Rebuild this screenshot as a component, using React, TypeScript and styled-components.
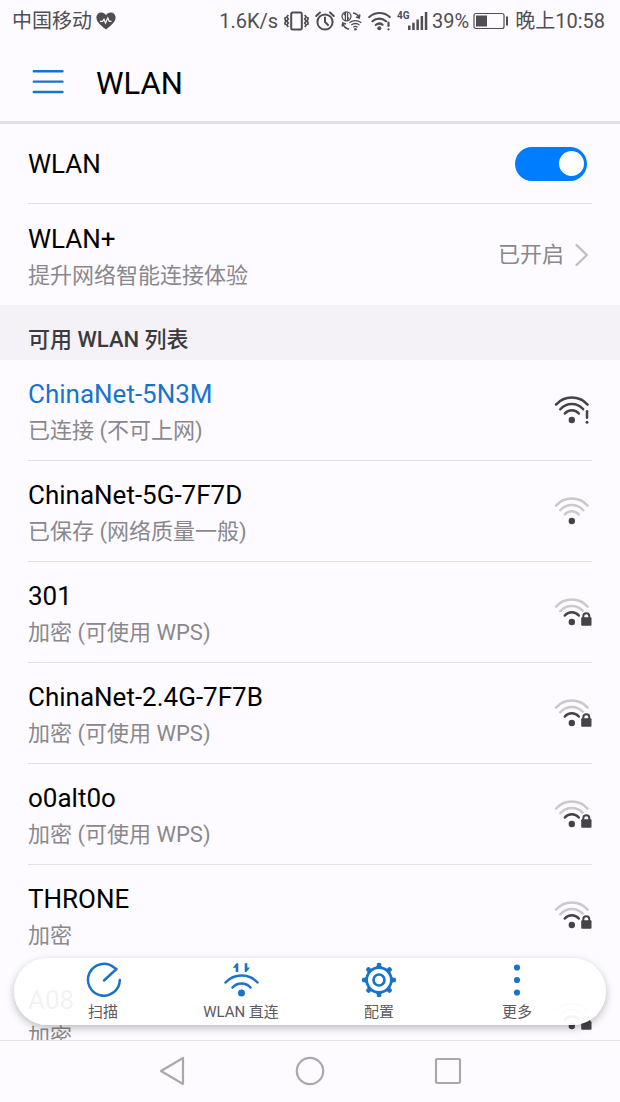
import React, { useState } from "react";
import styled, { createGlobalStyle } from "styled-components";

const color = {
  page: "#fdfbff",
  band: "#f4f2f6",
  line: "#e2e0e4",
  text: "#000000",
  muted: "#8a888c",
  status: "#504e52",
  accent: "#1a73cb",
  toggle: "#007dff",
  glyph: "#454347",
  faint: "#cbc9cd",
  nav: "#aaa8ac",
};

const GlobalStyle = createGlobalStyle`
  * { box-sizing: border-box; }
  body {
    margin: 0;
    background: ${color.page};
    color: ${color.text};
    font-family: Roboto, "Noto Sans CJK SC", sans-serif;
  }
  h1, h2, ul { margin: 0; padding: 0; }
  ul { list-style: none; }
  button { font: inherit; color: inherit; border: 0; padding: 0; background: none; cursor: pointer; }
  svg { display: block; flex: none; }
`;

const Screen = styled.div`
  display: flex;
  flex-direction: column;
  height: 100vh;
  overflow: hidden;
`;

const StatusBar = styled.div`
  display: flex;
  justify-content: space-between;
  align-items: center;
  flex: none;
  height: 42px;
  padding: 0 15px 0 12px;
  font-size: 20px;
  line-height: 24px;
  color: ${color.status};
  white-space: nowrap;
`;

const StatusGroup = styled.div<{ $gap: number }>`
  display: flex;
  align-items: center;
  gap: ${(p) => p.$gap}px;
`;

const Header = styled.header`
  display: flex;
  align-items: center;
  flex: none;
  gap: 32px;
  height: 82px;
  padding: 0 32px;
  border-bottom: 3px solid ${color.line};
`;

const MenuButton = styled.button`
  display: flex;
`;

const Title = styled.h1`
  padding-top: 4px;
  font-size: 31px;
  font-weight: 400;
  line-height: 40px;
`;

const Body = styled.div`
  position: relative;
  flex: 1;
  min-height: 0;
`;

const Scroller = styled.main`
  height: 100%;
  overflow-y: auto;
  scrollbar-width: none;
`;

const Inset = styled.div`
  padding: 0 28px;
`;

const ToggleRow = styled.label`
  display: flex;
  align-items: center;
  justify-content: space-between;
  height: 80px;
  padding-right: 5px;
  border-bottom: 1px solid ${color.line};
  font-size: 26px;
  line-height: 36px;
`;

const Switch = styled.input`
  appearance: none;
  display: flex;
  align-items: center;
  width: 72px;
  height: 34px;
  margin: 0;
  padding: 0 3px;
  border-radius: 17px;
  background: ${color.faint};
  cursor: pointer;
  &::before {
    content: "";
    width: 25px;
    height: 25px;
    border-radius: 50%;
    background: #fff;
  }
  &:checked {
    justify-content: flex-end;
    background: ${color.toggle};
  }
`;

const Row = styled.button<{ $divided?: boolean }>`
  display: flex;
  align-items: center;
  justify-content: space-between;
  width: 100%;
  height: 101px;
  text-align: left;
  border-bottom: ${(p) => (p.$divided ? `1px solid ${color.line}` : "0")};
`;

const RowText = styled.span`
  display: flex;
  flex-direction: column;
  padding-top: 6px;
`;

const RowTitle = styled.span<{ $active?: boolean }>`
  font-size: 26px;
  line-height: 36px;
  color: ${(p) => (p.$active ? color.accent : color.text)};
`;

const RowNote = styled.span`
  font-size: 22px;
  line-height: 38px;
  color: ${color.muted};
`;

const RowValue = styled.span`
  display: flex;
  align-items: center;
  gap: 10px;
  padding-right: 3px;
  font-size: 22px;
  line-height: 38px;
  color: ${color.muted};
`;

const SectionTitle = styled.h2`
  height: 55px;
  padding: 16px 28px 0;
  background: ${color.band};
  font-size: 22px;
  font-weight: 500;
  line-height: 38px;
  color: #3c3a3e;
`;

const Toolbar = styled.div`
  position: absolute;
  left: 14px;
  right: 14px;
  bottom: 15px;
  display: flex;
  height: 67px;
  padding: 0 20px;
  border-radius: 34px;
  background: rgba(255, 255, 255, 0.95);
  box-shadow: 0 3px 8px rgba(0, 0, 0, 0.26);
`;

const ToolButton = styled.button`
  display: flex;
  flex: 1;
  flex-direction: column;
  align-items: center;
  padding-top: 4px;
  font-size: 15px;
  line-height: 28px;
  color: #5c5a5e;
  svg { color: ${color.accent}; }
`;

const NavBar = styled.nav`
  display: flex;
  flex: none;
  justify-content: center;
  height: 62px;
  padding-bottom: 2px;
  border-top: 1px solid ${color.line};
`;

const NavButton = styled.button`
  display: flex;
  align-items: center;
  justify-content: center;
  width: 138px;
  color: ${color.nav};
`;

type Badge = "lock" | "alert" | "none";

const WifiIcon = ({ level, badge }: { level: number; badge: Badge }) => {
  const tone = (n: number) => (level >= n ? color.glyph : color.faint);
  return (
    <svg width="40" height="36" viewBox="0 0 40 36" fill="none" strokeWidth="2.5" strokeLinecap="round">
      <path d="M4 12.6A21.3 21.3 0 0 1 35.6 12.6" stroke={tone(3)} />
      <path d="M8.3 17.3A15.3 15.3 0 0 1 31.3 17.3" stroke={tone(2)} />
      <path d="M12.8 21.5A9.3 9.3 0 0 1 26.8 21.5" stroke={tone(1)} />
      <circle cx="19.8" cy="28" r="3.2" fill={color.glyph} />
      {badge === "alert" && (
        <g>
          <path d="M35 19.3V25.7" stroke={color.page} strokeWidth="6" />
          <path d="M35 19.3V25.7" stroke={color.glyph} />
          <circle cx="35" cy="30.3" r="1.5" fill={color.glyph} />
        </g>
      )}
      {badge === "lock" && (
        <g>
          <path d="M30.8 24V22.6a3.5 3.5 0 0 1 7 0V24" stroke={color.page} strokeWidth="5" />
          <path d="M31.3 24V22.3a3 3 0 0 1 6 0V24" stroke={color.glyph} strokeWidth="2" />
          <rect x="29.2" y="23.2" width="10.3" height="8.6" rx="1" fill={color.glyph} />
        </g>
      )}
    </svg>
  );
};

const HeartIcon = () => (
  <svg width="20" height="18" viewBox="0 0 20 18">
    <path d="M10 17.6C4.6 13.4.4 10 .4 5.6.4 2.6 2.6.5 5.3.5 7.3.5 9 1.5 10 3.2 11 1.5 12.7.5 14.7.5 17.4.5 19.6 2.6 19.6 5.6 19.6 10 15.4 13.4 10 17.6Z" fill={color.status} />
    <path d="M4 9.3H6.500L8 7.300 9.500 11 11.800 6 13.300 9.300H15.500" fill="none" stroke={color.page} strokeWidth="1.2" />
  </svg>
);

const VibrateIcon = () => (
  <svg width="25" height="20" viewBox="0 0 25 20" fill="none" stroke="currentColor" strokeWidth="2">
    <rect x="7.2" y="1.5" width="10.6" height="17" rx="1.5" />
    <path d="M4.3 4 2.800 6 4.300 8 2.800 10 4.300 12 2.800 14 4.300 16M1.400 6 .9 8 1.900 10 .9 12 1.400 14M20.700 4 22.200 6 20.700 8 22.200 10 20.700 12 22.200 14 20.700 16M23.600 6 24.100 8 23.100 10 24.100 12 23.600 14" strokeWidth="1.7" />
  </svg>
);

const AlarmIcon = () => (
  <svg width="20" height="20" viewBox="0 0 20 20" fill="none" stroke="currentColor" strokeWidth="2" strokeLinecap="round">
    <circle cx="10" cy="11" r="7.6" />
    <path d="M10 6.500V11L13 14M1.200 5 5 1.500M18.800 5 15 1.500" />
  </svg>
);

const NetworkSwapIcon = () => (
  <svg width="21" height="20" viewBox="0 0 21 20" fill="none" stroke="currentColor" strokeWidth="1.3">
    <circle cx="5.500" cy="5.300" r="4.500" />
    <path d="M4.400 9V2L2.800 4M6.600 1.500V8.500L8.200 6.600" />
    <path d="M12 2C15 2.500 17 4 18 6.500M18.800 3.500 18.200 7 15 6M2 12.500C2.800 15.500 4.800 17.500 8 18.200M1.200 15.500 1.800 12 5 13" strokeWidth="1.6" />
    <path d="M8.500 11.800A9 9 0 0 1 20.300 11.800M10.300 14.100A6 6 0 0 1 18.500 14.100M12.200 16.200A3.500 3.500 0 0 1 16.600 16.200" />
    <circle cx="14.400" cy="18.300" r="1.3" fill="currentColor" stroke="none" />
  </svg>
);

const StatusWifiIcon = () => (
  <svg width="23" height="20" viewBox="0 0 23 20" fill="none" stroke="currentColor" strokeWidth="2.2" strokeLinecap="round">
    <path d="M1.300 6A15 15 0 0 1 21.700 6M4.500 10.200A10 10 0 0 1 18 10.200M7.800 14A5.500 5.500 0 0 1 14.500 13.600" />
    <circle cx="11.300" cy="17.300" r="2" fill="currentColor" stroke="none" />
    <path d="M20.500 11.500V15M20.500 18.400V18.500" />
  </svg>
);

const SignalIcon = () => (
  <svg width="31" height="22" viewBox="0 0 31 22" fill="currentColor">
    <text x="0" y="9" fontSize="10" fontWeight="700">4G</text>
    <path d="M11 15.500h2.500v4.500h-2.500zM15.200 12.700h2.500V20h-2.500zM19.400 9.500h2.500v10.500h-2.500zM23.600 6h2.500V20h-2.500zM27.800 2h2.500V20h-2.500z" />
  </svg>
);

const BatteryIcon = () => (
  <svg width="36" height="18" viewBox="0 0 36 18">
    <rect x="1" y="1.500" width="30" height="15" rx="2" fill="none" stroke="currentColor" strokeWidth="1.2" />
    <rect x="3" y="3.500" width="11" height="11" fill="currentColor" />
    <path d="M34 4.500V13.500" stroke="currentColor" strokeWidth="2" />
  </svg>
);

const MenuIcon = () => (
  <svg width="32" height="26" viewBox="0 0 32 26" stroke={color.accent} strokeWidth="2.4" strokeLinecap="round">
    <path d="M1.800 2.300H30.500M1.800 12.600H30.500M1.800 23H30.500" />
  </svg>
);

const ChevronIcon = () => (
  <svg width="15" height="24" viewBox="0 0 15 24" fill="none" stroke="#c0bec2" strokeWidth="2.3" strokeLinecap="round">
    <path d="M2.500 2 12.800 12 2.500 22" />
  </svg>
);

const ScanIcon = () => (
  <svg width="36" height="36" viewBox="0 0 36 36" fill="none" stroke="currentColor" strokeWidth="2.5" strokeLinecap="round" strokeLinejoin="round">
    <path d="M34.800 18A15.900 15.900 0 1 1 29 5.500L31.500 7 19 18.500" />
  </svg>
);

const DirectIcon = () => (
  <svg width="36" height="36" viewBox="0 0 36 36" fill="none" stroke="currentColor" strokeWidth="2.5" strokeLinecap="round">
    <path d="M2.500 20.500A22 22 0 0 1 34.500 20.500M9.500 25.500A12 12 0 0 1 27.500 25.500" />
    <circle cx="18.500" cy="31" r="3.500" fill="currentColor" stroke="none" />
    <path d="M15.300 10V1.200H13.500L9.800 5.800H12.700V10ZM21.700 1.200V10H23.500L27 5.500H24.300V1.200Z" fill="currentColor" stroke="none" />
  </svg>
);

const GearIcon = () => (
  <svg width="36" height="36" viewBox="0 0 36 36" fill="none" stroke="currentColor" strokeWidth="2.7">
    <circle cx="18" cy="18" r="12.300" />
    <circle cx="18" cy="18" r="5.500" />
    {[0, 45, 90, 135, 180, 225, 270, 315].map((angle) => (
      <path
        key={angle}
        d="M14.500 5.500 15.800 3.800V1.500Q18 .2 20.200 1.500V3.800L21.500 5.500Z"
        transform={`rotate(${angle} 18 18)`}
        fill="currentColor"
        stroke="none"
      />
    ))}
  </svg>
);

const MoreIcon = () => (
  <svg width="36" height="36" viewBox="0 0 36 36" fill="currentColor">
    <circle cx="18" cy="5.500" r="3.1" />
    <circle cx="18" cy="18" r="3.1" />
    <circle cx="18" cy="30.500" r="3.1" />
  </svg>
);

const networks: { name: string; note: string; level: number; badge: Badge; active?: boolean }[] = [
  { name: "ChinaNet-5N3M", note: "已连接 (不可上网)", level: 3, badge: "alert", active: true },
  { name: "ChinaNet-5G-7F7D", note: "已保存 (网络质量一般)", level: 0, badge: "none" },
  { name: "301", note: "加密 (可使用 WPS)", level: 1, badge: "lock" },
  { name: "ChinaNet-2.4G-7F7B", note: "加密 (可使用 WPS)", level: 1, badge: "lock" },
  { name: "o0alt0o", note: "加密 (可使用 WPS)", level: 1, badge: "lock" },
  { name: "THRONE", note: "加密", level: 1, badge: "lock" },
  { name: "A08", note: "加密", level: 1, badge: "lock" },
];

const tools = [
  { label: "扫描", Icon: ScanIcon },
  { label: "WLAN 直连", Icon: DirectIcon },
  { label: "配置", Icon: GearIcon },
  { label: "更多", Icon: MoreIcon },
];

export default function App() {
  const [enabled, setEnabled] = useState(true);
  return (
    <>
      <GlobalStyle />
      <Screen>
        <StatusBar>
          <StatusGroup $gap={4}>
            <span>中国移动</span>
            <HeartIcon />
          </StatusGroup>
          <StatusGroup $gap={6}>
            <span>1.6K/s</span>
            <VibrateIcon />
            <AlarmIcon />
            <NetworkSwapIcon />
            <StatusWifiIcon />
            <StatusGroup $gap={4}>
              <SignalIcon />
              <span>39%</span>
              <BatteryIcon />
            </StatusGroup>
            <span>晚上10:58</span>
          </StatusGroup>
        </StatusBar>
        <Header>
          <MenuButton type="button" aria-label="菜单">
            <MenuIcon />
          </MenuButton>
          <Title>WLAN</Title>
        </Header>
        <Body>
          <Scroller>
            <Inset>
              <ToggleRow htmlFor="wlan">
                WLAN
                <Switch
                  id="wlan"
                  type="checkbox"
                  role="switch"
                  checked={enabled}
                  onChange={(e) => setEnabled(e.target.checked)}
                />
              </ToggleRow>
              <Row type="button">
                <RowText>
                  <RowTitle>WLAN+</RowTitle>
                  <RowNote>提升网络智能连接体验</RowNote>
                </RowText>
                <RowValue>
                  已开启
                  <ChevronIcon />
                </RowValue>
              </Row>
            </Inset>
            <SectionTitle>可用 WLAN 列表</SectionTitle>
            <Inset as="ul">
              {networks.map((n) => (
                <li key={n.name}>
                  <Row type="button" $divided>
                    <RowText>
                      <RowTitle $active={n.active}>{n.name}</RowTitle>
                      <RowNote>{n.note}</RowNote>
                    </RowText>
                    <WifiIcon level={n.level} badge={n.badge} />
                  </Row>
                </li>
              ))}
            </Inset>
          </Scroller>
          <Toolbar role="toolbar">
            {tools.map(({ label, Icon }) => (
              <ToolButton key={label} type="button">
                <Icon />
                {label}
              </ToolButton>
            ))}
          </Toolbar>
        </Body>
        <NavBar>
          <NavButton type="button" aria-label="返回">
            <svg width="28" height="30" viewBox="0 0 28 30" fill="none" stroke="currentColor" strokeWidth="2.2" strokeLinejoin="round">
              <path d="M3 15 25 2V28Z" />
            </svg>
          </NavButton>
          <NavButton type="button" aria-label="主页">
            <svg width="30" height="30" viewBox="0 0 30 30" fill="none" stroke="currentColor" strokeWidth="2.2">
              <circle cx="15" cy="15" r="13.200" />
            </svg>
          </NavButton>
          <NavButton type="button" aria-label="最近任务">
            <svg width="28" height="28" viewBox="0 0 28 28" fill="none" stroke="currentColor" strokeWidth="2.2">
              <rect x="2" y="2" width="24" height="24" rx="1" />
            </svg>
          </NavButton>
        </NavBar>
      </Screen>
    </>
  );
}
